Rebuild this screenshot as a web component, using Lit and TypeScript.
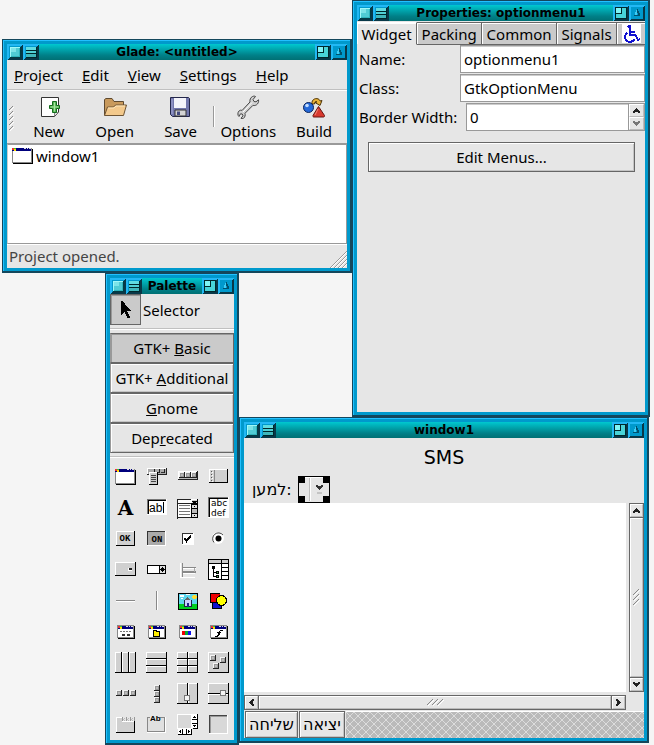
import { LitElement, html, svg, css, nothing } from "lit";
import { customElement, property } from "lit/decorators.js";

const r = (x: number, y: number, w: number, h: number, fill: string) =>
  svg`<rect x=${x} y=${y} width=${w} height=${h} fill=${fill}></rect>`;

/* Raised block: white on the top and left, black on the bottom and right */
const raised = (x: number, y: number, w: number, h: number, fill = "#d0d0d0") =>
  svg`${r(x, y, w, h, "#000")}${r(x, y, w - 1, h - 1, "#fff")}${r(x + 1, y + 1, w - 2, h - 2, fill)}`;

/* Small knob used by the box and toolbar icons */
const knob = (x: number, y: number) =>
  svg`${r(x, y, 6, 6, "#222")}${r(x, y, 5, 5, "#f4f4f4")}${r(x + 1, y + 1, 4, 4, "#999")}${r(x + 2, y + 2, 2, 2, "#bbb")}`;

const titleStrip = (x: number, y: number, w: number) =>
  svg`${r(x, y, w, 3, "#00007c")}${r(x, y, 2, 2, "#e33")}${r(x + 2, y, 2, 1, "#3c3")}${r(x + 2, y + 1, 2, 2, "#fd0")}
  ${r(x + w - 7, y, 2, 1, "#ddd")}${r(x + w - 4, y, 1, 1, "#ddd")}${r(x + w - 2, y, 2, 1, "#ddd")}`;

const windowIcon = (x: number, y: number) =>
  svg`${r(x + 1, y + 1, 20, 15, "#000")}${r(x, y, 20, 15, "#888")}${titleStrip(x, y, 19)}${r(x + 1, y + 3, 18, 11, "#fff")}`;

const dialogIcon = (inner: unknown) =>
  svg`${r(8, 10, 17, 13, "#000")}${r(7, 9, 17, 13, "#888")}${titleStrip(8, 10, 15)}${r(8, 13, 15, 8, "#fff")}${inner}`;

const paletteIcons: [string, unknown][] = [
  ["Window", windowIcon(5, 8)],
  ["Menu Bar", svg`${r(6, 7, 20, 7, "#222")}${r(6, 7, 19, 6, "#fff")}${r(7, 8, 18, 5, "#aaa")}
    ${r(13, 8, 1, 4, "#222")}${r(18, 8, 1, 4, "#222")}${r(23, 8, 1, 4, "#222")}${r(9, 11, 4, 1, "#333")}${r(15, 11, 3, 1, "#333")}${r(20, 11, 3, 1, "#333")}
    ${raised(8, 11, 9, 13, "#ccc")}${r(10, 14, 5, 1, "#444")}${r(10, 16, 5, 1, "#444")}${r(10, 18, 5, 1, "#444")}${r(10, 20, 5, 1, "#444")}`],
  ["Toolbar", svg`${r(6, 10, 20, 9, "#222")}${r(6, 10, 19, 8, "#fff")}${r(7, 11, 18, 7, "#bbb")}${knob(7, 11)}${knob(13, 11)}${knob(19, 11)}`],
  ["Handle Box", svg`${raised(6, 8, 19, 14)}${r(11, 9, 1, 12, "#888")}
    ${[10, 13, 16, 19].map((y) => svg`${r(8, y, 1, 1, "#555")}${r(9, y + 1, 1, 1, "#fff")}`)}`],
  ["Label", svg`<text class="serif" x="15.5" y="23" text-anchor="middle">A</text>`],
  ["Text Entry", svg`${r(6, 7, 20, 16, "#fff")}${r(6, 7, 19, 15, "#777")}${r(7, 8, 18, 14, "#000")}${r(8, 9, 17, 13, "#fff")}
    <text class="sans" x="8" y="20">ab</text>${r(22, 10, 1, 11, "#000")}`],
  ["Combo Box", svg`${r(5, 7, 21, 1, "#222")}${r(5, 7, 1, 20, "#222")}${r(6, 8, 13, 18, "#fff")}${r(5, 11, 21, 1, "#222")}${r(5, 25, 21, 1, "#222")}
    ${raised(19, 7, 7, 5)}<path d="M20 9h5l-2.500 3z"/>${r(19, 12, 7, 14, "#000")}${r(20, 13, 5, 3, "#ddd")}${r(20, 17, 5, 4, "#bbb")}${r(20, 22, 5, 3, "#ddd")}
    ${r(22, 14, 1, 1, "#000")}${r(22, 23, 1, 1, "#000")}${[13, 16, 19, 22].map((y) => r(7, y, 11, 1, "#777"))}`],
  ["Text View", svg`${r(5, 5, 21, 21, "#fff")}${r(5, 5, 20, 20, "#777")}${r(6, 6, 19, 19, "#000")}${r(7, 7, 18, 18, "#fff")}
    <text class="small" x="8" y="14">abc</text><text class="small" x="8" y="24">def</text>`],
  ["Button", svg`${raised(6, 8, 19, 15)}<text class="mini" x="15" y="18" text-anchor="middle">OK</text>`],
  ["Toggle Button", svg`${r(6, 8, 19, 15, "#fff")}${r(6, 8, 18, 14, "#333")}${r(7, 9, 17, 13, "#aaa")}<text class="mini" x="16" y="19" text-anchor="middle">ON</text>`],
  ["Check Button", svg`${r(10, 10, 12, 12, "#fff")}${r(10, 10, 11, 11, "#333")}${r(11, 11, 10, 10, "#fff")}<path d="M12.500 15l2 3 4.500-5.500" fill="none" stroke="#000" stroke-width="2"/>`],
  ["Radio Button", svg`<g shape-rendering="auto"><circle cx="15" cy="15" r="6" fill="#fff"/><path d="M11 19.500A5.500 5.500 0 1 1 20 12" fill="none" stroke="#444"/><circle cx="15.500" cy="15.500" r="3"/></g>`],
  ["Option Menu", svg`${raised(5, 8, 21, 14)}${r(18, 14, 4, 3, "#fff")}${r(19, 14, 3, 2, "#222")}`],
  ["Spin Button", svg`${r(6, 11, 19, 9, "#000")}${r(7, 12, 11, 7, "#fff")}${r(19, 12, 5, 3, "#ddd")}${r(19, 16, 5, 3, "#ddd")}${r(21, 13, 1, 1, "#000")}${r(20, 14, 3, 1, "#000")}${r(20, 16, 3, 1, "#000")}${r(21, 17, 1, 1, "#000")}`],
  ["Separator Box", svg`${r(8, 9, 1, 15, "#fff")}${r(10, 9, 1, 15, "#888")}${r(11, 13, 13, 1, "#888")}${r(11, 14, 13, 1, "#fff")}${r(11, 17, 13, 2, "#888")}${r(11, 19, 12, 1, "#fff")}${r(8, 23, 15, 1, "#fff")}${r(22, 14, 1, 4, "#aaa")}`],
  ["Tree View", svg`${r(5, 5, 21, 21, "#000")}${r(6, 6, 12, 3, "#ccc")}${r(19, 6, 6, 3, "#ccc")}${r(6, 10, 12, 15, "#fff")}
    ${[10, 14, 18, 22].map((y) => r(19, y, 6, 3, "#fff"))}${r(9, 12, 3, 3, "#000")}${r(10, 14, 1, 9, "#000")}${r(10, 18, 5, 1, "#000")}${r(10, 22, 5, 1, "#000")}
    ${r(13, 17, 3, 3, "#000")}${r(14, 18, 1, 1, "#5b5")}${r(13, 21, 3, 3, "#000")}${r(14, 22, 1, 1, "#5b5")}`],
  ["Horizontal Separator", svg`${r(6, 15, 19, 1, "#888")}${r(6, 16, 19, 1, "#fff")}`],
  ["Vertical Separator", svg`${r(15, 6, 1, 19, "#888")}${r(16, 6, 1, 19, "#fff")}`],
  ["Image", svg`${r(6, 8, 20, 17, "#000")}${r(7, 9, 18, 10, "#5ed8ee")}${r(7, 19, 18, 5, "#00d020")}${r(8, 10, 4, 2, "#fff")}${r(14, 9, 4, 1, "#fff")}${r(9, 13, 2, 1, "#fff")}
    ${r(21, 10, 3, 4, "#fd3")}${r(20, 11, 5, 2, "#fd3")}<path d="M11 16l4-4 5 4z" fill="#666"/>${r(12, 15, 8, 7, "#224")}${r(13, 15, 6, 6, "#c8d0ff")}${r(15, 18, 2, 4, "#228")}`],
  ["Drawing Area", svg`${r(7, 8, 10, 10, "#000")}${r(8, 9, 9, 8, "#e00")}${r(9, 17, 10, 7, "#000")}${r(10, 18, 8, 5, "#11c")}<circle cx="18.500" cy="15.500" r="5" fill="#ff0" stroke="#000"/>`],
  ["Dialog", dialogIcon(svg`${[10, 13, 16, 19].map((x) => r(x, 15, 2, 1, "#777"))}${r(12, 18, 3, 2, "#333")}${r(17, 18, 3, 2, "#333")}`)],
  ["File Selection", dialogIcon(svg`${r(12, 14, 4, 1, "#000")}${r(12, 15, 7, 6, "#000")}${r(13, 15, 2, 5, "#fe0")}${r(13, 16, 5, 4, "#fe0")}`)],
  ["Colour Selection", dialogIcon(svg`${r(10, 15, 3, 4, "#e00")}${r(13, 15, 3, 4, "#0a3")}${r(16, 15, 3, 4, "#11e")}`)],
  ["Font Selection", dialogIcon(svg`${r(17, 14, 3, 1, "#000")}${r(16, 15, 1, 2, "#000")}${r(14, 16, 4, 1, "#000")}${r(15, 17, 2, 2, "#000")}${r(14, 19, 2, 1, "#000")}${r(12, 20, 3, 1, "#000")}`)],
  ["Horizontal Box", svg`${[5, 12, 19].map((x) => raised(x, 5, 7, 21))}`],
  ["Vertical Box", svg`${[5, 12, 19].map((y) => raised(5, y, 21, 7))}`],
  ["Table", svg`${[5, 12, 19].map((y) => svg`${raised(5, y, 11, 7)}${raised(16, y, 10, 7)}`)}`],
  ["Fixed Positions", svg`${raised(5, 5, 21, 21)}${knob(7, 8)}${knob(17, 10)}${knob(10, 16)}`],
  ["Horizontal Button Box", svg`${knob(6, 12)}${knob(13, 12)}${knob(20, 12)}`],
  ["Vertical Button Box", svg`${knob(13, 7)}${knob(13, 13)}${knob(13, 19)}`],
  ["Horizontal Panes", svg`${raised(5, 5, 11, 21)}${raised(16, 5, 10, 21)}${r(12, 17, 6, 6, "#777")}${r(13, 18, 4, 4, "#f4f4f4")}`],
  ["Vertical Panes", svg`${raised(5, 5, 21, 11)}${raised(5, 16, 21, 10)}${r(17, 12, 6, 6, "#777")}${r(18, 13, 4, 4, "#f4f4f4")}`],
  ["Notebook", svg`${raised(6, 12, 19, 12)}${r(6, 8, 6, 1, "#fff")}${r(6, 8, 1, 6, "#fff")}${r(7, 9, 5, 5, "#d0d0d0")}
    ${[12, 16, 20].map((x) => svg`${r(x, 8, 1, 4, "#999")}${r(x + 1, 10, 1, 1, "#bbb")}${r(x + 2, 9, 1, 1, "#bbb")}${r(x + 2, 11, 1, 1, "#bbb")}`)}${r(24, 8, 1, 4, "#999")}`],
  ["Frame", svg`${r(6, 8, 19, 16, "#fff")}${r(6, 8, 18, 15, "#888")}${r(7, 9, 16, 13, "#e0e0e0")}${r(9, 6, 10, 6, "#e6e6e6")}<text class="tiny" x="9" y="12">Ab</text>`],
  ["Scrolled Window", svg`${r(5, 5, 15, 15, "#fff")}${r(6, 6, 13, 13, "#d8d8d8")}${r(21, 5, 5, 15, "#000")}${r(20, 5, 5, 14, "#fff")}${r(20, 10, 5, 1, "#000")}${r(20, 14, 5, 1, "#000")}
    ${r(22, 7, 1, 1, "#000")}${r(21, 8, 3, 1, "#000")}${r(21, 16, 3, 1, "#000")}${r(22, 17, 1, 1, "#000")}
    ${r(6, 20, 14, 6, "#000")}${r(6, 20, 13, 5, "#fff")}${r(10, 20, 1, 5, "#000")}${r(14, 20, 1, 5, "#000")}${r(7, 22, 1, 1, "#000")}${r(8, 21, 1, 3, "#000")}${r(16, 21, 1, 3, "#000")}${r(17, 22, 1, 1, "#000")}`],
  ["Viewport", svg`${r(6, 6, 19, 19, "#fff")}${r(6, 6, 18, 18, "#444")}${r(7, 7, 17, 17, "#999")}${r(8, 8, 16, 16, "#d8d8d8")}`],
];

const toolIcons: Record<string, unknown> = {
  New: svg`<path d="M4.500 2.500h17v15l-4 4h-13z" fill="#fff" stroke="#333"/><path d="M17.500 21v-3.500h4" fill="#ddd" stroke="#888"/>
    <path d="M15.500 6.500h4v4h3v3h-3v4h-4v-4h-3v-3h3z" fill="#55b455" stroke="#146c1c"/><path d="M17.500 7.500v9M13.500 12h8" stroke="#a8e6a0"/>`,
  Open: svg`<path d="M1.500 20V4.500l1.500-1h6l2 3h9.500V19z" fill="#c99a5c" stroke="#5f4a30"/><path d="M1.500 20.500l3-8.500h6l2-2h11l-3 10.500z" fill="#f3c98c" stroke="#6e5434"/><path d="M5 13h6l2-2h9" stroke="#ffe6b8" fill="none"/>`,
  Save: svg`<path d="M2.500 2.500h18l1 1v18h-17l-2-2z" fill="#7277ac" stroke="#24274a"/><path d="M6 3h12v10H6z" fill="#f4f4fa"/><path d="M4 4v15" stroke="#a7abd8"/><path d="M7 15h11v6H7z" fill="#d4d4d4" stroke="#333"/><path d="M9 16.500h3v3.500H9z" fill="#444a80"/>`,
  Options: svg`<path d="M3 21.500c-1.500-1-1.500-4 0-5.500 1-1 2-1 3-.5l8-8.500c-.5-2 .5-4.500 2.500-5.500 1-.5 2.500-.5 3 0l-2.500 3 1 2 2 .3 2.500-2c.5 2-.5 4-2 5-1 .7-2.500 1-3.500.5l-8 8c.5 1.700 0 4-1.500 5-.8.4-1.700.3-2.500 0l2-2.500-.8-1.800-1.700-.2z" fill="#d0d0d0" stroke="#444"/><path d="M7 17l9-9.500" stroke="#fff"/>`,
  Build: svg`<path d="M10 9c-1-6 7-7 8-3l2-.5-2 5-5-3 2-.5c-1-1.500-2.500 0-2.500 2z" fill="#eab238" stroke="#4e3408"/><circle cx="6.500" cy="12.500" r="5" fill="#2468d8" stroke="#0b235a"/><circle cx="5" cy="10.500" r="1.800" fill="#c2dcff"/><path d="M16.500 11.500l6 9c.3.800-.3 1.500-1 1.500h-9.500c-1 0-1.300-.7-1-1.500z" fill="#d8382e" stroke="#661410"/><path d="M16 14l-3 6" stroke="#f08878"/>`,
};

@customElement("desk-window")
export class DeskWindow extends LitElement {
  @property() heading = "";

  static styles = css`
    :host { display: flex; flex-direction: column; box-sizing: border-box; background: #0099cc; padding: 4px 3px 3px 4px;
      border: 1px solid #14475c; border-width: 1px 2px 2px 1px; box-shadow: inset 1px 1px #22c0ff; }
    header { display: flex; flex: none; height: 16px; background: linear-gradient(#00c8d0, #008088 70%, #007074); }
    h2 { flex: 1; margin: 0; font: bold 12px/16px "DejaVu Sans", sans-serif; text-align: center; white-space: nowrap; color: #000; overflow: hidden; }
    button { flex: none; width: 16px; height: 16px; padding: 0; border: 0; background: none; }
    svg { display: block; shape-rendering: crispEdges; }
    .body { flex: 1; display: flex; flex-direction: column; background: #e6e6e6; min-height: 0; }
  `;

  private control(name: string, glyph: unknown) {
    return html`<button aria-label=${name}><svg width="16" height="16" viewBox="0 0 16 16">
      ${r(0, 0, 16, 16, "#083848")}<path d="M0 16V0h16l-2 2H2v12z" fill="#22b8f4"/>${r(2, 2, 12, 12, "#0099cc")}${glyph}</svg></button>`;
  }

  render() {
    return html`<header>
        ${this.control("Close", svg`${r(3, 3, 11, 11, "#003c44")}${r(3, 3, 10, 10, "#9ff8f8")}${r(4, 4, 9, 9, "#30b4bc")}${r(4, 4, 8, 8, "#50ccd4")}${r(4, 4, 5, 4, "#7ce4e8")}`)}
        ${this.control("Menu", svg`${r(3, 3, 11, 11, "#00282c")}${r(3, 3, 10, 3, "#60dce0")}${r(3, 7, 10, 2, "#50d0d4")}${r(3, 10, 10, 3, "#40b8bc")}`)}
        <h2>${this.heading}</h2>
        ${this.control("Maximise", svg`${r(2, 2, 12, 12, "#00282c")}${r(3, 3, 10, 10, "#48d4d8")}${r(4, 3, 5, 6, "#00282c")}${r(3, 8, 6, 1, "#00282c")}${r(3, 3, 5, 5, "#80f4f4")}`)}
        ${this.control("Shade", svg`<path d="M5 11l3-7v7z" fill="#40ccf4"/><path d="M8 4h1v2h1v2h1v3H5v-1h4V8H8z" fill="#00506c"/>`)}
      </header><div class="body"><slot></slot></div>`;
  }
}

@customElement("app-root")
export class AppRoot extends LitElement {
  static styles = css`
    :host { display: block; position: relative; min-height: 100vh; background: #f5f5f5; color: #000; overflow: hidden;
      font: 15px/20px "Noto Sans", "DejaVu Sans", sans-serif; }
    * { box-sizing: border-box; }
    button, input, textarea, select { font: inherit; color: inherit; margin: 0; padding: 0; border-radius: 0; }
    svg { display: block; flex: none; shape-rendering: crispEdges; }
    desk-window { position: absolute; }
    .project { left: 2px; top: 39px; width: 350px; min-height: 234px; }
    .properties { left: 352px; top: 0; width: 298px; min-height: 417px; }
    .palette { left: 105px; top: 273px; width: 134px; min-height: 472px; }
    .design { left: 239px; top: 417px; width: 410px; min-height: 326px; }

    .menubar { display: flex; gap: 19px; padding: 5px 7px; height: 30px; border-bottom: 1px solid #c0c0c0; }
    .menubar button, .tool { border: 0; background: none; }
    .toolbar { display: flex; height: 54px; padding-top: 4px; border-top: 1px solid #fff; border-bottom: 1px solid #999; }
    .grip { width: 9px; padding: 11px 0 0 2px; }
    .tool { flex: 1; display: flex; flex-direction: column; align-items: center; gap: 2px; line-height: 20px; }
    .tool svg { shape-rendering: auto; }
    .rule { width: 2px; height: 21px; margin-top: 11px; border-left: 1px solid #999; border-right: 1px solid #fff; }
    .list { flex: 1; margin: 0; padding: 1px 4px; list-style: none; background: #fff; border: 1px solid #999; border-left-color: #ccc; }
    .list li { display: flex; align-items: center; gap: 3px; }
    .status { display: flex; justify-content: space-between; align-items: flex-end; height: 24px; padding-left: 2px; color: #444; border-top: 1px solid #fff; }
    .status span { padding-bottom: 2px; }

    .tabs { display: flex; height: 24px; padding-top: 1px; }
    .tabs button { border: 1px solid #666; border-left: 0; background: #cacaca; padding: 0 2px; line-height: 20px; flex: auto; white-space: nowrap; box-shadow: inset 1px 1px #fff; }
    .tabs .current { background: #e6e6e6; border-color: #fff #666 #e6e6e6 #fff; }
    .tabs .access { display: flex; justify-content: center; align-items: center; border-right: 0; }
    .form { display: grid; grid-template-columns: minmax(0, 1fr); gap: 1px; }
    .field { display: flex; align-items: center; padding-left: 2px; }
    .field label { flex: none; width: 101px; }
    .field .wide { width: 107px; }
    .field input { flex: 1; min-width: 0; height: 28px; padding: 0 3px; border: 1px solid #999; background: #fff; outline: 0; box-shadow: inset 0 1px #ccc; }
    .steps { display: grid; flex: none; width: 16px; height: 28px; border: 1px solid #999; border-left: 0; }
    .steps button, .scroll button { display: flex; justify-content: center; align-items: center; border: 1px solid #fff; border-right-color: #bbb; border-bottom-color: #bbb; background: #e6e6e6; }
    .steps button { min-height: 0; overflow: hidden; }
    .edit { margin: 11px 10px 11px 11px; height: 30px; }
    .raised { border: 1px solid #666; background: #e6e6e6; box-shadow: inset 1px 1px #fff, inset -1px -1px #c4c4c4; text-align: center; white-space: nowrap; }

    .selector { display: flex; align-items: center; gap: 2px; height: 35px; padding-bottom: 3px; border-bottom: 1px solid #c0c0c0; box-shadow: 0 1px #fff; }
    .selector button { display: flex; align-items: center; justify-content: center; width: 31px; height: 31px; }
    .selector .raised, .groups .chosen { background: #cacaca; box-shadow: inset 1px 1px #999; }
    .groups { display: grid; grid-auto-rows: 30px; margin: 4px 0 3px; }
    .groups button { border-left-color: #999; }
    .icons { display: grid; grid-template-columns: repeat(4, 1fr); grid-auto-rows: 31px; padding-top: 4px; border-top: 1px solid #c0c0c0; box-shadow: inset 0 1px #fff; }
    .icons button { border: 0; background: none; display: flex; justify-content: center; }
    .serif { font: 900 20px "DejaVu Serif", serif; }
    .sans { font: 12px "Liberation Sans", sans-serif; }
    .small { font: 9px "DejaVu Sans", sans-serif; }
    .mini { font: bold 9px "Liberation Mono", monospace; }
    .tiny { font: bold 8px "Liberation Sans", sans-serif; }

    .caption { margin: 0; padding: 7px 0; font: 19px/24px "DejaVu Sans", sans-serif; text-align: center; }
    .recipient { display: flex; align-items: center; gap: 6px; padding-left: 8px; height: 27px; }
    .hebrew { font-family: "DejaVu Sans", sans-serif; font-size: 16px; }
    .option { position: relative; width: 32px; height: 27px; }
    .option select { display: block; width: 100%; height: 100%; appearance: none; background: #e6e6e6; border: 1px solid #000; }
    .option svg { position: absolute; inset: 0; pointer-events: none; }
    .editor { flex: 1; display: grid; grid-template-columns: 1fr 15px; grid-template-rows: 1fr 15px; gap: 3px; }
    .editor textarea { display: block; width: 100%; height: 100%; min-height: 189px; border: 0; resize: none; background: #fff; outline: 0; }
    .scroll { display: flex; border: 1px solid #666; }
    .scroll.vertical { flex-direction: column; }
    .scroll button { flex: none; width: 13px; height: 13px; }
    .scroll .thumb { flex: 1; width: auto; height: auto; outline: 1px solid #666; }
    .horizontal .thumb { margin: 0 1px; }
    .vertical .thumb { margin: 1px 0; }
    .actions { display: flex; gap: 1px; height: 28px; padding: 1px 0 0 1px; }
    .actions button { padding: 0 3px; line-height: 16px; }
    .filler { flex: 1; height: 27px; border-top: 1px solid #fff; }
  `;

  private arrow(direction: "up" | "down" | "left" | "right", fill = "#222") {
    const paths = {
      up: "M4 2h1v1h1v1h1v1h1v2H6V6H3v1H1V5h1V4h1V3h1z",
      down: "M4 7h1V6h1V5h1V4h1V2H6v1H3V2H1v2h1v1h1v1h1z",
      left: "M2 4v1h1v1h1v1h1v1h2V6H6V3h1V1H5v1H4v1H3v1z",
      right: "M7 4v1H6v1H5v1H4v1H2V6h1V3H2V1h2v1h1v1h1v1z",
    };
    return html`<svg width="9" height="9" viewBox="0 0 9 9"><path d=${paths[direction]} fill=${fill}/>${r(3, 3, 3, 3, fill)}</svg>`;
  }

  private ridges(w: number, h: number, count: number, dx: number, dy: number, len: number) {
    return html`<svg width=${w} height=${h} viewBox="0 0 ${w} ${h}">${Array.from({ length: count }, (_, i) => svg`
      <path d=${`M${1 + i * dx} ${len + 1 + i * dy}l${len}-${len}`} stroke="#fff" fill="none"/>
      <path d=${`M${i * dx} ${len + i * dy}l${len}-${len}`} stroke="#888" fill="none"/>`)}</svg>`;
  }

  private tool(name: string) {
    return html`<button class="tool"><svg width="24" height="24" viewBox="0 0 24 24">${toolIcons[name]}</svg>${name}</button>`;
  }

  private scrollbar(vertical: boolean) {
    return html`<div class="scroll ${vertical ? "vertical" : "horizontal"}">
      <button aria-label="Back">${this.arrow(vertical ? "up" : "left")}</button>
      <button class="thumb" aria-label="Scroll">${vertical ? this.ridges(7, 17, 3, 0, 5, 6) : this.ridges(17, 7, 3, 5, 0, 6)}</button>
      <button aria-label="Forward">${this.arrow(vertical ? "down" : "right")}</button>
    </div>`;
  }

  render() {
    return html`
      <desk-window class="project" heading="Glade: <untitled>">
        <nav class="menubar"><button><u>P</u>roject</button><button><u>E</u>dit</button><button><u>V</u>iew</button><button><u>S</u>ettings</button><button><u>H</u>elp</button></nav>
        <div class="toolbar">
          <div class="grip">${this.ridges(6, 26, 5, 0, 5, 4)}</div>
          ${this.tool("New")}${this.tool("Open")}${this.tool("Save")}<span class="rule"></span>${this.tool("Options")}${this.tool("Build")}
        </div>
        <ul class="list"><li><svg width="21" height="16" viewBox="0 0 21 16">${windowIcon(0, 0)}</svg>window1</li></ul>
        <div class="status"><span>Project opened.</span>
          <svg width="18" height="18" viewBox="0 0 18 18" shape-rendering="auto">${[1, 5, 9, 13].map((n) => svg`<path d=${`M${n + 1} 18L18 ${n + 1}`} stroke="#fff"/><path d=${`M${n} 18L18 ${n}`} stroke="#999"/>`)}</svg>
        </div>
      </desk-window>

      <desk-window class="properties" heading="Properties: optionmenu1">
        <div class="tabs" role="tablist">
          <button role="tab" class="current" aria-selected="true">Widget</button><button role="tab">Packing</button><button role="tab">Common</button><button role="tab">Signals</button>
          <button role="tab" class="access" aria-label="Accessibility"><svg width="19" height="19" viewBox="0 0 19 19" shape-rendering="auto">${r(0, 0, 19, 19, "#fff")}
            <g fill="none" stroke="#1010d0" stroke-width="2"><circle cx="7.500" cy="2.500" r="1" /><path d="M7.500 4v7h6l2.500 5 2-1M8 7.500h5M5.500 8.500a5 5 0 1 0 7 6.500"/></g></svg></button>
        </div>
        <div class="form">
          <div class="field"><label for="name">Name:</label><input id="name" .value=${"optionmenu1"}></div>
          <div class="field"><label for="class">Class:</label><input id="class" .value=${"GtkOptionMenu"} readonly></div>
          <div class="field"><label class="wide" for="border">Border Width:</label><input id="border" .value=${"0"}>
            <div class="steps"><button aria-label="Increase">${this.arrow("up")}</button><button aria-label="Decrease">${this.arrow("down", "#777")}</button></div></div>
        </div>
        <button class="raised edit">Edit Menus...</button>
      </desk-window>

      <desk-window class="palette" heading="Palette">
        <div class="selector"><button class="raised" aria-labelledby="selector"><svg width="20" height="20" viewBox="0 0 20 20"><path d="M5 1v14h1v-1h1v-1h1v-1h1v2h1v2h1v2h3v-2h-1v-2h-1v-2h-1v-1h4v-1h-1V9h-1V8h-1V7h-1V6h-1V5h-1V4H9V3H8V2H7V1z"/></svg></button><span id="selector">Selector</span></div>
        <div class="groups">
          <button class="raised chosen">GTK+ <u>B</u>asic</button><button class="raised">GTK+ <u>A</u>dditional</button>
          <button class="raised"><u>G</u>nome</button><button class="raised">Dep<u>r</u>ecated</button>
        </div>
        <div class="icons">${paletteIcons.map(([name, art]) => html`<button aria-label=${name}><svg width="31" height="31" viewBox="0 0 31 31">${art ?? nothing}</svg></button>`)}</div>
      </desk-window>

      <desk-window class="design" heading="window1">
        <h1 class="caption">SMS</h1>
        <div class="recipient"><label class="hebrew" for="to">למען<bdi dir="ltr">:</bdi></label>
          <div class="option"><select id="to"></select><svg width="32" height="27" viewBox="0 0 32 27">
            ${r(2, 1, 28, 1, "#fff")}${r(11, 2, 1, 23, "#bbb")}${r(12, 2, 1, 23, "#fff")}
            ${r(0, 0, 7, 7, "#000")}${r(25, 0, 7, 7, "#000")}${r(0, 20, 7, 7, "#000")}${r(25, 20, 7, 7, "#000")}
            <path d="M18 9h2v1h3V9h2v2h-1v1h-1v1h-1v1h-1v-1h-1v-1h-1v-1h-1z" fill="#333"/>${r(19, 16, 5, 2, "#c4c4c4")}</svg></div>
        </div>
        <div class="editor"><textarea aria-label="Message"></textarea>${this.scrollbar(true)}${this.scrollbar(false)}</div>
        <div class="actions"><button class="raised hebrew" dir="rtl">שליחה</button><button class="raised hebrew" dir="rtl">יציאה</button>
          <svg class="filler" width="1" height="27"><defs><pattern id="hatch" width="8" height="8" patternUnits="userSpaceOnUse">
            ${r(0, 0, 8, 8, "#bababa")}${[0, 1, 2, 3, 4, 5, 6, 7].map((i) => svg`${r(i, i, 1, 1, "#dcdcdc")}${r(i, 7 - i, 1, 1, "#dcdcdc")}`)}</pattern></defs>
            <rect width="100%" height="100%" fill="url(#hatch)"></rect></svg></div>
      </desk-window>`;
  }
}
